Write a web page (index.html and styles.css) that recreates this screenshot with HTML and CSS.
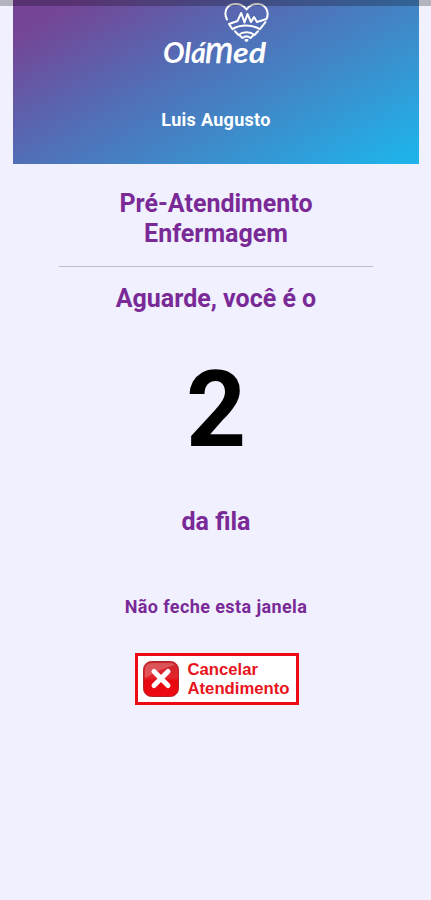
FILE: index.html
```
<!DOCTYPE html>
<html lang="pt-BR">
<head>
    <meta charset="UTF-8">
    <meta name="viewport" content="width=device-width, initial-scale=1.0">
    <title>OláMed</title>
    <link rel="stylesheet" href="styles.css">
</head>
<body>
    <div class="statusbar"></div>
    <header class="topo">
        <svg class="logo" width="110" height="72" viewBox="161 0 110 72">
            <!-- coração -->
            <g class="logo-traco">
                <path d="M227 19.500C223.500 13 226 4.200 235 4C240 3.800 244 6 246.500 9.500C249 6 253 3.800 258 4C266 4.200 269.500 12 266.500 19L257 22L254 17L251 22L247.500 14L244.500 22.500L241.200 13L237.500 21L229 24L232.500 29.200C240 24.400 252 24.400 260 29.200L265.500 22"/>
                <path d="M235 31.300L238.500 35C243 31.400 250 31.400 254.500 35L258 31.300"/>
                <path d="M240 35.800L242.500 38C245 36 248 36 250.500 38L253 35.800"/>
                <path d="M245.500 40L246.500 41L247.500 40Z"/>
            </g>
            <text class="logo-texto" x="163" y="63" textLength="43" lengthAdjust="spacingAndGlyphs">Olá</text>
            <text class="logo-m" x="205" y="63" textLength="28.500" lengthAdjust="spacingAndGlyphs">M</text>
            <text class="logo-texto" x="233" y="63" textLength="33" lengthAdjust="spacingAndGlyphs">ed</text>
        </svg>
        <p class="nome">Luis Augusto</p>
    </header>
    <main class="fila">
        <h1 class="titulo">Pré-Atendimento<br>Enfermagem</h1>
        <hr class="linha">
        <p class="texto">Aguarde, você é o</p>
        <p class="posicao">2</p>
        <p class="texto">da fila</p>
        <p class="aviso">Não feche esta janela</p>
        <button class="cancelar" type="button">
            <svg class="icone" width="38" height="38" viewBox="0 0 38 38">
                <defs>
                    <linearGradient id="vermelho" x1="0" y1="0" x2="0" y2="1">
                        <stop offset="0" stop-color="#c9252b"/>
                        <stop offset="0.450" stop-color="#e3262c"/>
                        <stop offset="0.550" stop-color="#e60810"/>
                        <stop offset="1" stop-color="#ee0a10"/>
                    </linearGradient>
                </defs>
                <rect x="1.500" y="1.500" width="35" height="35" rx="8" fill="url(#vermelho)" stroke="#b3242a"/>
                <path d="M3 18V10Q3 3 10 3H28Q31 3 33 5Q20 8 3 18Z" fill="#fff" opacity="0.220"/>
                <path d="M12 11.500L26 25.500M26 11.500L12 25.500" stroke="#fff" stroke-width="5" stroke-linecap="round"/>
            </svg>
            <span>Cancelar<br>Atendimento</span>
        </button>
    </main>
</body>
</html>
```

FILE: styles.css
```
*{
    margin: 0;
    padding: 0;
    box-sizing: border-box;
}
body{
    height: 900px;
    background-color: #f0f0ff;
    font-family: Roboto, Arial, sans-serif;
    overflow: hidden;
}
/* faixa escura por cima do topo */
.statusbar{
    position: absolute;
    top: 0;
    left: 0;
    width: 100%;
    height: 6px;
    background-color: rgba(0, 0, 0, 0.25);
}
.topo{
    display: flex;
    flex-direction: column;
    align-items: center;
    height: 164px;
    margin: 0 12px 0 13px;
    background-image: linear-gradient(150deg, #764297 0%, #744697 10%, #526eb6 41%, #3d8ccb 66%, #1fb3ea 97%);
}
.logo{
    display: block;
}
.logo-traco{
    fill: none;
    stroke: #fff;
    stroke-width: 2;
    stroke-linejoin: round;
    stroke-linecap: round;
}
.logo-texto{
    font: italic bold 28px Lato, sans-serif;
    fill: #fff;
}
.logo-m{
    font: italic 38px Lato, sans-serif;
    fill: #fff;
    stroke: #fff;
    stroke-width: 0.5;
    text-transform: lowercase;
}
.nome{
    margin-top: 36px;
    font-size: 18px;
    font-weight: 700;
    line-height: 24px;
    letter-spacing: 0.3px;
    color: #fff;
}
.fila{
    display: flex;
    flex-direction: column;
    align-items: center;
    padding: 25px 0 0 1px;
    text-align: center;
    color: #7a2a96;
}
.titulo,
.texto{
    font-size: 25px;
    font-weight: 700;
    line-height: 30px;
}
.linha{
    width: 314px;
    margin: 17px 0;
    border: 0;
    border-top: 1px solid #c0bdd0;
}
.posicao{
    margin: 37px 0 36px;
    font-size: 105px;
    font-weight: 700;
    line-height: 120px;
    color: #000;
}
.aviso{
    margin-top: 58px;
    font-size: 18px;
    font-weight: 700;
    line-height: 24px;
    letter-spacing: 0.4px;
}
.cancelar{
    display: flex;
    align-items: center;
    width: 164px;
    height: 52px;
    margin: 34px 0 0 1px;
    padding: 0 0 0 4px;
    gap: 8px;
    border: 3px solid #ee0a12;
    background-color: #fff;
    font: bold 16.7px/19.5px "Liberation Sans", Arial, sans-serif;
    color: #e8141c;
    text-align: left;
}
.icone{
    flex: none;
}
```
